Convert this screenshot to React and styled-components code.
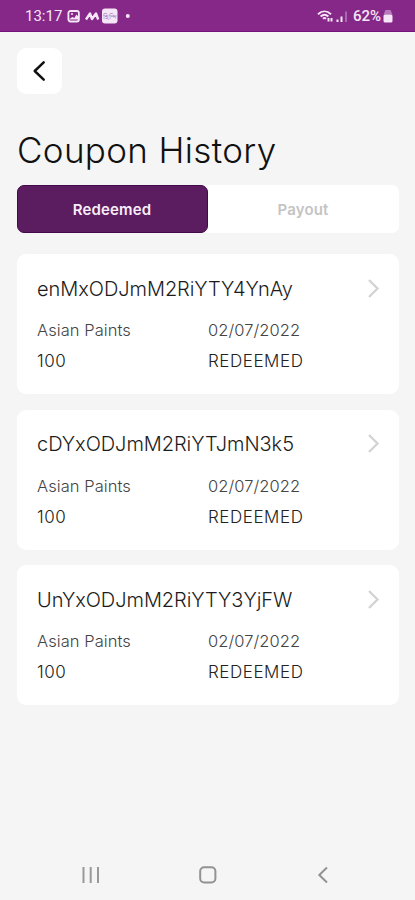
import React from 'react';
import styled, { createGlobalStyle } from 'styled-components';

const GlobalStyle = createGlobalStyle`
  * {
    box-sizing: border-box;
  }

  body {
    margin: 0;
    background: #f5f5f5;
    font-family: Inter, 'Liberation Sans', sans-serif;
  }
`;

const Screen = styled.div`
  display: flex;
  flex-direction: column;
  width: 415px;
  height: 900px;
  overflow: hidden;
  background: #f5f5f5;
`;

const StatusBar = styled.header`
  display: flex;
  align-items: center;
  justify-content: space-between;
  height: 32px;
  padding: 0 22px 0 25px;
  background: #852888;
  border-bottom: 1px solid #76127b;
  color: #f6e6f7;
`;

const StatusGroup = styled.div`
  display: flex;
  align-items: center;
  gap: ${({ $gap }) => $gap};
  height: 32px;
`;

const StatusText = styled.span`
  font-family: Roboto, sans-serif;
  font-size: 15px;
  font-weight: ${({ $weight }) => $weight || 400};
  line-height: 32px;
`;

const Main = styled.main`
  display: flex;
  flex: 1;
  flex-direction: column;
  padding: 16px 16px 0 17px;
`;

const BackButton = styled.button`
  display: flex;
  align-items: center;
  justify-content: center;
  width: 45px;
  height: 46px;
  padding: 0 1px 0 0;
  border: 0;
  border-radius: 9px;
  background: #fff;
`;

const Title = styled.h1`
  margin: 33px 0 0;
  font-size: 35px;
  font-weight: 300;
  line-height: 46px;
  letter-spacing: 0.34px;
  color: #111;
  white-space: nowrap;
`;

const Tabs = styled.div`
  display: grid;
  grid-template-columns: 191px 1fr;
  height: 48px;
  margin-top: 12px;
  border-radius: 7px;
  background: #fff;
`;

const Tab = styled.button`
  padding: 0 1px 0 0;
  border: ${({ $active }) => ($active ? '1px solid #43094a' : '0')};
  border-radius: 7px;
  background: ${({ $active }) => ($active ? '#5c1c60' : 'transparent')};
  color: ${({ $active }) => ($active ? '#f8edf8' : '#c4c4c4')};
  font-family: inherit;
  font-size: 15px;
  font-weight: 600;
  letter-spacing: 0.15px;
`;

const CouponList = styled.div`
  display: flex;
  flex-direction: column;
  gap: 15.5px;
  margin-top: 21px;
`;

const Card = styled.article`
  height: 140px;
  padding: 20px 19.5px 0 20px;
  border-radius: 9px;
  background: #fff;
`;

const CardHeader = styled.div`
  display: flex;
  align-items: center;
  justify-content: space-between;
  height: 29.5px;
`;

const Code = styled.h2`
  margin: 0;
  font-size: 20px;
  font-weight: 300;
  letter-spacing: -0.05px;
  color: #1c1c1c;
`;

const Details = styled.div`
  display: grid;
  grid-template-columns: 171px 1fr;
  grid-auto-rows: 31px;
  align-items: center;
  margin-top: 11.5px;
`;

const Detail = styled.span`
  font-size: ${({ $muted }) => ($muted ? '16.5px' : '17px')};
  font-weight: 300;
  line-height: 31px;
  letter-spacing: ${({ $muted }) => ($muted ? '0.06px' : '0.55px')};
  color: ${({ $muted }) => ($muted ? '#444' : '#222')};
`;

const NavBar = styled.nav`
  display: flex;
  align-items: center;
  justify-content: space-between;
  height: 50px;
  padding: 0 83px 0 79px;
`;

const coupons = [
  'enMxODJmM2RiYTY4YnAy',
  'cDYxODJmM2RiYTJmN3k5',
  'UnYxODJmM2RiYTY3YjFW',
];

const NotificationIcons = () => (
  <svg width='65' height='18' viewBox='0 0 65 18' fill='none'>
    <rect x='1.4' y='4' width='10.5' height='10.5' rx='2' stroke='#f6e6f7' strokeWidth='1.8' />
    <path d='M2.4 12l3-2 2 1 2-3.5 2 2v3h-9z' fill='#f6e6f7' />
    <circle cx='5' cy='7' r='1' fill='#f6e6f7' />
    <path
      d='M19 12.5l4-6 2 5.5 4-5.5 2.2 6'
      stroke='#f6e6f7'
      strokeWidth='2.4'
      strokeLinejoin='round'
    />
    <rect x='35' y='1.5' width='15.5' height='15' rx='3' fill='#f6e6f7' />
    <text x='42.8' y='11.5' textAnchor='middle' fill='#8f5594' fontFamily='Noto Sans' fontSize='7'>
      হিন্দি
    </text>
    <circle cx='60.8' cy='9' r='2' fill='#f6e6f7' />
  </svg>
);

const ConnectionIcons = () => (
  <svg width='34' height='18' viewBox='0 0 34 18' fill='none'>
    <path
      d='M1 7.2C5 3.4 10 3.4 14 7.2M3.6 9.5c2.5-2.4 5.3-2.4 7.8 0M6 11.7c1-.9 2-.9 3 0'
      stroke='#f6e6f7'
      strokeWidth='1.9'
    />
    <path d='M11.5 14.5v-3.5M14.5 11v3.5' stroke='#f6e6f7' strokeWidth='2' />
    <path d='M20.5 12.5v2.5M24.5 9.5V15' stroke='#f6e6f7' strokeWidth='2' />
    <path d='M29 4.5V15' stroke='#a967ad' strokeWidth='2' />
  </svg>
);

const BatteryIcon = () => (
  <svg width='10' height='14' viewBox='0 0 10 14'>
    <path d='M2.5 1h5L9.5 5.5h-9z' fill='#b67aba' />
    <rect x='0.5' y='5.5' width='9' height='8' rx='1.5' fill='#f6e6f7' />
  </svg>
);

const Chevron = () => (
  <svg width='13' height='20' viewBox='0 0 13 20' fill='none'>
    <path d='M2 1l8.5 8.5L2 18' stroke='#d3d3d3' strokeWidth='2.3' />
  </svg>
);

const App = () => {
  return (
    <>
      <GlobalStyle />
      <Screen>
        <StatusBar>
          <StatusGroup $gap='5px'>
            <StatusText>13:17</StatusText>
            <NotificationIcons />
          </StatusGroup>
          <StatusGroup $gap='2px'>
            <ConnectionIcons />
            <StatusText $weight={500}>62%</StatusText>
            <BatteryIcon />
          </StatusGroup>
        </StatusBar>
        <Main>
          <BackButton aria-label='Back'>
            <svg width='14' height='22' viewBox='0 0 14 22' fill='none'>
              <path
                d='M11.7 2.3L2.7 11l9 8.7'
                stroke='#111'
                strokeWidth='2.5'
                strokeLinecap='round'
                strokeLinejoin='round'
              />
            </svg>
          </BackButton>
          <Title>Coupon History</Title>
          <Tabs>
            <Tab $active>Redeemed</Tab>
            <Tab>Payout</Tab>
          </Tabs>
          <CouponList>
            {coupons.map((code) => (
              <Card key={code}>
                <CardHeader>
                  <Code>{code}</Code>
                  <Chevron />
                </CardHeader>
                <Details>
                  <Detail $muted>Asian Paints</Detail>
                  <Detail $muted>02/07/2022</Detail>
                  <Detail>100</Detail>
                  <Detail>REDEEMED</Detail>
                </Details>
              </Card>
            ))}
          </CouponList>
        </Main>
        <NavBar>
          <svg width='24' height='18' viewBox='0 0 24 18' fill='none'>
            <path d='M4.5 1v16M11.7 1v16M19 1v16' stroke='#999' strokeWidth='2' />
          </svg>
          <svg width='20' height='18' viewBox='0 0 20 18' fill='none'>
            <rect x='1.2' y='1.2' width='15.2' height='15.2' rx='4' stroke='#929292' strokeWidth='2' />
          </svg>
          <svg width='18' height='18' viewBox='0 0 18 18' fill='none'>
            <path d='M13 1.5L5.3 9l7.7 7.5' stroke='#929292' strokeWidth='2' />
          </svg>
        </NavBar>
      </Screen>
    </>
  );
};

export default App;
